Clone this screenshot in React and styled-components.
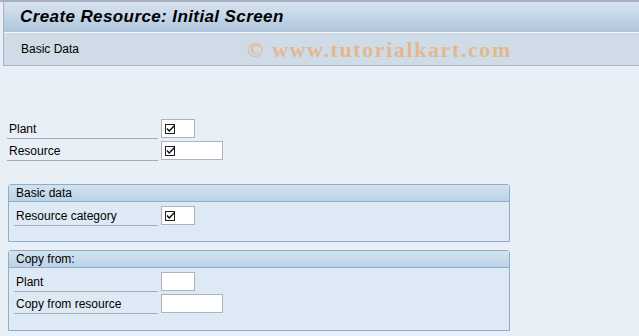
import React from "react"
import styled, { createGlobalStyle } from "styled-components"

const GlobalStyle = createGlobalStyle`
  html, body {
    margin: 0;
    padding: 0;
    background: #e8eff6;
  }
  body {
    font-family: Tahoma, "Liberation Sans", Arial, sans-serif;
    font-size: 12px;
    color: #000;
  }
`

const Page = styled.div`
  width: 639px;
  height: 336px;
  overflow: hidden;
  background: #e8eff6;
`

const Header = styled.div`
  border-top: 2px solid #a9b0bf;
  padding-left: 3px;
`

const HeaderInner = styled.div`
  border-left: 1px solid #a7b3c1;
  border-bottom: 1px solid #a7b3c1;
`

const TitleBar = styled.div`
  height: 30px;
  display: flex;
  align-items: center;
  padding-left: 16px;
  background: linear-gradient(to bottom, #d7e4f0, #b0c6dc);
  border-bottom: 1px solid #f4f8fb;
`

const Title = styled.h1`
  margin: 0;
  font-family: "Liberation Sans", Arial, sans-serif;
  font-size: 17px;
  letter-spacing: 0.4px;
  font-weight: bold;
  font-style: italic;
  color: #000;
`

const Toolbar = styled.div`
  height: 32px;
  display: flex;
  align-items: center;
  padding-left: 17px;
  background: #cfdbe6;
  position: relative;
`

const ToolbarItem = styled.span`
  font-size: 12px;
  color: #000;
`

const Watermark = styled.span`
  position: absolute;
  left: 243px;
  top: 4px;
  font-family: "Liberation Serif", "Times New Roman", serif;
  font-weight: bold;
  font-size: 22px;
  letter-spacing: 1.6px;
  color: rgba(238, 168, 100, 0.7);
  pointer-events: none;
`

const Content = styled.div`
  padding: 53px 0 0 7px;
`

const Fields = styled.div`
  display: flex;
  flex-direction: column;
  gap: 2px;
`

const Row = styled.div`
  display: flex;
  align-items: flex-start;
  gap: 3px;
`

const Label = styled.div`
  width: ${p => p.$width}px;
  height: 19px;
  border-bottom: 1px solid #a3adb8;
  display: flex;
  align-items: center;
  padding-left: 2px;
  box-sizing: content-box;
  font-size: 12px;
  white-space: nowrap;
`

const Input = styled.div`
  width: ${p => p.$width}px;
  height: 19px;
  background: #fff;
  border: 1px solid #abb4be;
  display: flex;
  align-items: center;
  padding-left: 3px;
  box-sizing: border-box;
`

const Group = styled.div`
  width: 502px;
  box-sizing: border-box;
  margin-left: 1px;
  margin-top: ${p => p.$top}px;
  border: 1px solid #8eadcc;
  border-radius: 3px 3px 0 0;
  background: #dde9f4;
`

const GroupHeader = styled.div`
  height: 16px;
  display: flex;
  align-items: center;
  padding-left: 7px;
  background: linear-gradient(to bottom, #d3e2ef, #bcd2e7);
  border-bottom: 1px solid #8eadcc;
  font-size: 12px;
`

const GroupBody = styled.div`
  padding: ${p => p.$pad};
`

const CheckIcon = () => (
  <svg width="10" height="10" viewBox="0 0 10 10">
    <rect x="0.5" y="0.5" width="9" height="9" fill="none" stroke="#222" strokeWidth="1" />
    <path d="M2 4.5 L4.2 7 L9.5 1.5" fill="none" stroke="#000" strokeWidth="1.2" />
  </svg>
)

const Field = ({ label, width, labelWidth = 149, required }) => (
  <Row>
    <Label $width={labelWidth}>{label}</Label>
    <Input $width={width}>{required && <CheckIcon />}</Input>
  </Row>
)

export default function App() {
  return (
    <Page>
      <GlobalStyle />
      <Header>
        <HeaderInner>
          <TitleBar>
            <Title>Create Resource: Initial Screen</Title>
          </TitleBar>
          <Toolbar>
            <ToolbarItem>Basic Data</ToolbarItem>
            <Watermark>© www.tutorialkart.com</Watermark>
          </Toolbar>
        </HeaderInner>
      </Header>
      <Content>
        <Fields>
          <Field label="Plant" width={34} required />
          <Field label="Resource" width={62} required />
        </Fields>
        <Group $top={23}>
          <GroupHeader>Basic data</GroupHeader>
          <GroupBody $pad="4px 0 15px 5px">
            <Fields>
              <Field label="Resource category" width={34} labelWidth={142} required />
            </Fields>
          </GroupBody>
        </Group>
        <Group $top={8}>
          <GroupHeader>Copy from:</GroupHeader>
          <GroupBody $pad="4px 0 16px 5px">
            <Fields>
              <Field label="Plant" width={34} labelWidth={142} />
              <Field label="Copy from resource" width={62} labelWidth={142} />
            </Fields>
          </GroupBody>
        </Group>
      </Content>
    </Page>
  )
}
